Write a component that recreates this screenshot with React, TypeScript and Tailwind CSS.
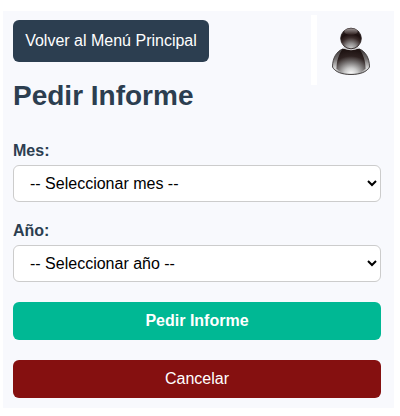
import React from "react";

function UserAvatar() {
  return (
    <svg className="mt-[16px] ml-[14px] h-[50px] w-[40px]" viewBox="0 0 40 50">
      <defs>
        <radialGradient id="head" cx="0.5" cy="1" r="0.9">
          <stop offset="0" stopColor="#cfcfcf" />
          <stop offset="0.3" stopColor="#8f8c8c" />
          <stop offset="0.6" stopColor="#3a2c2b" />
          <stop offset="0.8" stopColor="#1c0f0f" />
          <stop offset="1" stopColor="#2b2121" />
        </radialGradient>
        <linearGradient id="shine" x1="0" y1="0" x2="0" y2="1">
          <stop offset="0" stopColor="#9a9393" />
          <stop offset="1" stopColor="#2a1a19" />
        </linearGradient>
        <radialGradient id="body" cx="0.5" cy="1" r="0.95">
          <stop offset="0" stopColor="#ffffff" />
          <stop offset="0.25" stopColor="#c9c9c9" />
          <stop offset="0.5" stopColor="#787474" />
          <stop offset="0.75" stopColor="#2e2221" />
          <stop offset="1" stopColor="#1f1413" />
        </radialGradient>
        <linearGradient id="side" x1="0" y1="0" x2="0" y2="1">
          <stop offset="0" stopColor="#3a3434" />
          <stop offset="0.4" stopColor="#777373" />
          <stop offset="0.75" stopColor="#d8d8d8" />
          <stop offset="1" stopColor="#888" />
        </linearGradient>
      </defs>
      <path d="M11.500 22C5.500 24.500 1.500 31 1.500 40C4 45 11 47.500 20 47.500S36 45 38.500 40C38.500 31 34.500 24.500 28.500 22Z" fill="url(#side)" stroke="#3c3838" strokeWidth="0.9" />
      <path d="M11.500 22C8 27 5.500 34 5.500 41.500C9 45.500 14 46.800 20 46.800S31 45.500 34.500 41.500C34.500 34 32 27 28.500 22Z" fill="url(#body)" />
      <path d="M12 21.200Q20 25.500 28 21.200L26 18H14Z" fill="#d4d4d6" />
      <circle cx="20" cy="11.500" r="10.300" fill="url(#head)" stroke="#2a2020" strokeWidth="0.9" />
      <ellipse cx="20" cy="4.800" rx="6.800" ry="3.200" fill="url(#shine)" />
    </svg>
  );
}

function SelectField({ id, label, placeholder }: { id: string; label: string; placeholder: string }) {
  return (
    <div className="mb-5 h-[60px] pt-[1px]">
      <label htmlFor={id} className="mb-[5px] block h-[18px] text-[16px] leading-[18px] font-bold text-[#2c3e50]">
        {label}
      </label>
      <select
        id={id}
        className="block h-[37px] w-full rounded-[6px] border border-[#cccccc] bg-white pl-3 text-[16px] text-black"
      >
        <option>{placeholder}</option>
      </select>
    </div>
  );
}

export default function App() {
  return (
    <div className="h-[416px] w-[400px] bg-white pt-[11px] pl-[3px] font-['Liberation_Sans',Arial,sans-serif]">
      <main className="h-[397px] w-[391px] bg-[#f8f9fd] pr-[13px] pl-[10px]">
        <header className="flex h-[74px]">
          <div className="w-[298px] pt-[9px]">
            <button className="h-[42px] w-[196px] rounded-[6px] bg-[#2c3e50] text-[16px] leading-[18px] whitespace-nowrap text-white">
              Volver al Menú Principal
            </button>
            <h1 className="mt-[18px] text-[28px] leading-[32px] font-bold text-[#2c3e50]">Pedir Informe</h1>
          </div>
          <div className="mt-1 h-[70px] w-[6px] shrink-0 bg-white" />
          <UserAvatar />
        </header>
        <form className="pt-[56px]">
          <SelectField id="mes" label="Mes:" placeholder="-- Seleccionar mes --" />
          <SelectField id="anio" label="Año:" placeholder="-- Seleccionar año --" />
          <div className="flex flex-col gap-5 pt-[1px]">
            <button type="button" className="h-[38px] rounded-[6px] bg-[#00b894] text-[16px] font-bold text-white">
              Pedir Informe
            </button>
            <button type="button" className="h-[38px] rounded-[6px] bg-[#851010] text-[16px] text-white">
              Cancelar
            </button>
          </div>
        </form>
      </main>
    </div>
  );
}
